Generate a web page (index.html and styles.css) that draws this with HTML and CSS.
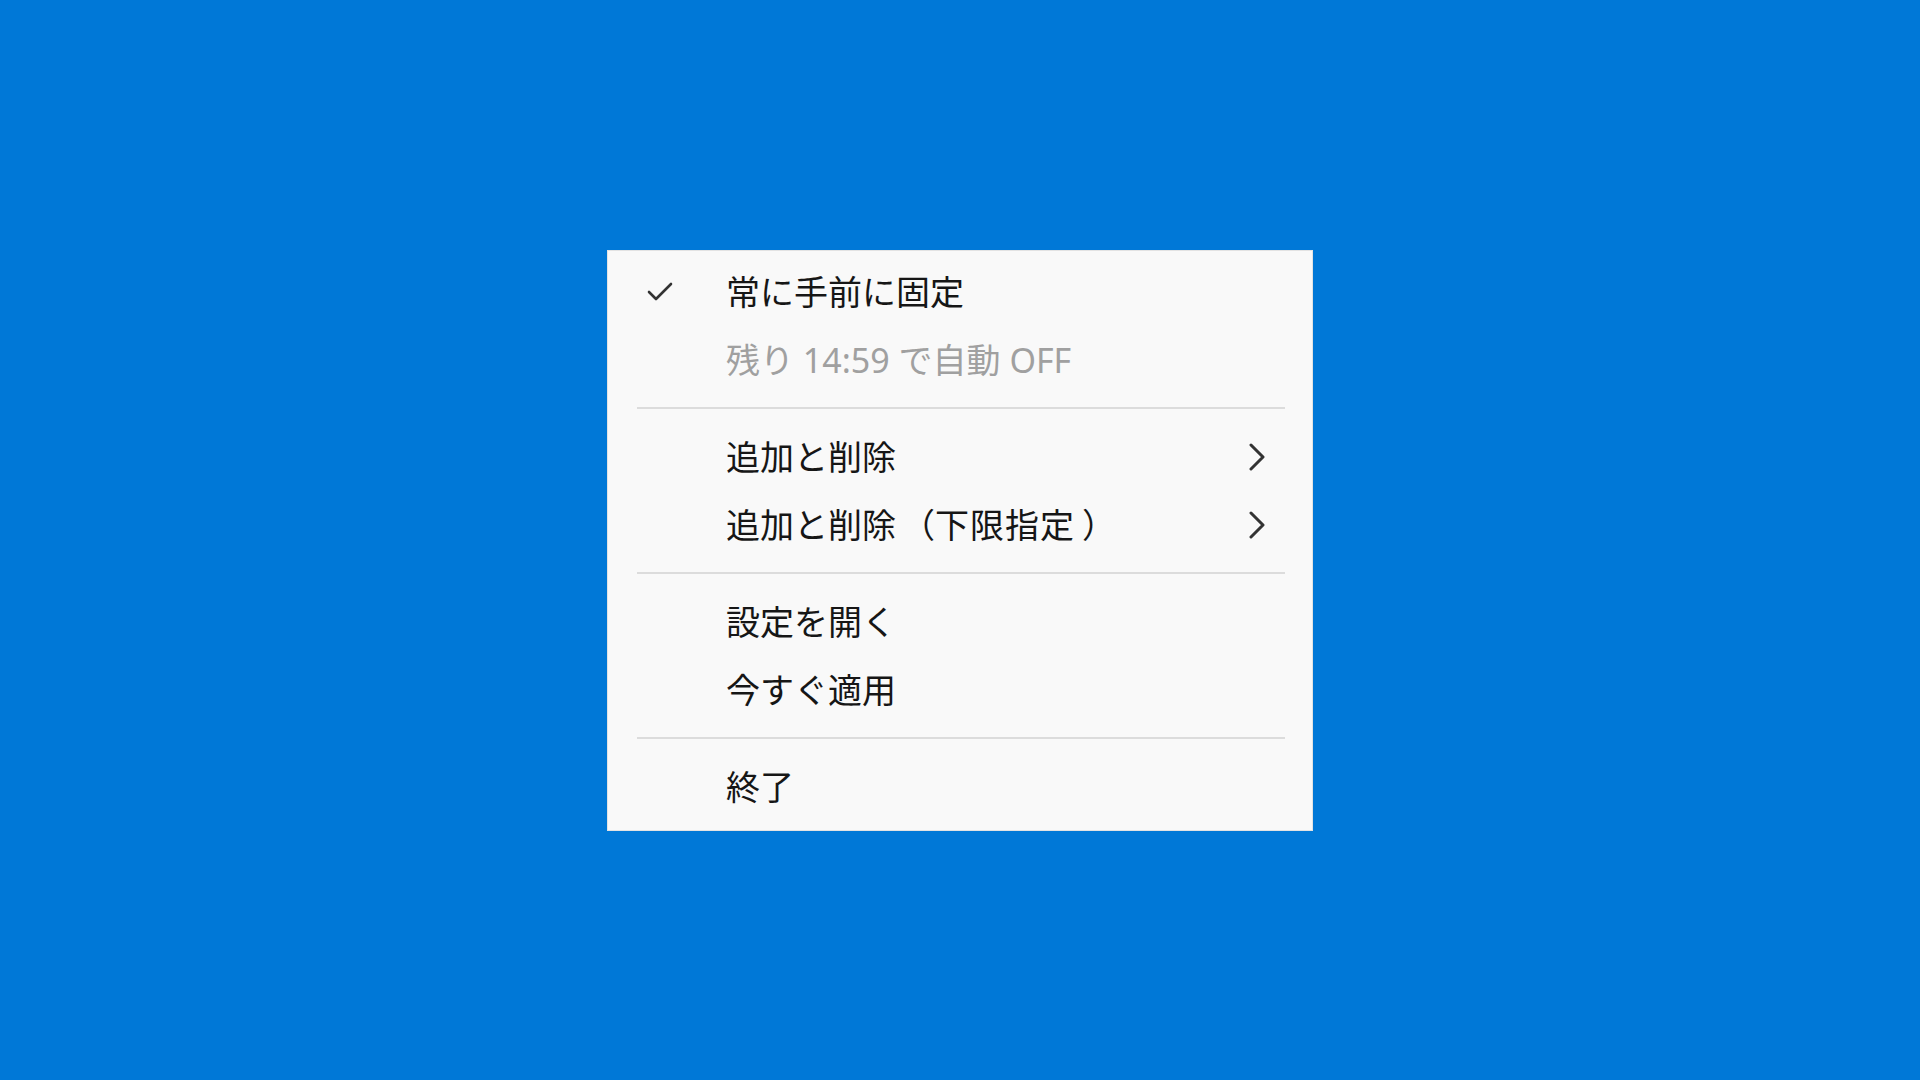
FILE: index.html
```html
<!DOCTYPE html>
<html lang="ja">
<head>
<meta charset="utf-8">
<title>Menu</title>
<link rel="stylesheet" href="styles.css">
</head>
<body>
<div class="menu">
  <div class="item">
    <span class="icon">
      <svg width="26" height="22" viewBox="0 0 26 22"><path d="M2 11 L9 18 L24 3" fill="none" stroke="#333" stroke-width="2.6" stroke-linecap="round" stroke-linejoin="round"/></svg>
    </span>
    <span class="label">常に手前に固定</span>
  </div>
  <div class="item disabled">
    <span class="icon"></span>
    <span class="label">残り 14:59 で自動 OFF</span>
  </div>
  <div class="sep"></div>
  <div class="item">
    <span class="icon"></span>
    <span class="label">追加と削除</span>
    <span class="chev"><svg width="20" height="28" viewBox="0 0 20 28"><path d="M4 2 L16 14 L4 26" fill="none" stroke="#333" stroke-width="3" stroke-linecap="round" stroke-linejoin="round"/></svg></span>
  </div>
  <div class="item">
    <span class="icon"></span>
    <span class="label">追加と削除<span class="po">（</span><span class="tight">下限指定</span><span class="pc">）</span></span>
    <span class="chev"><svg width="20" height="28" viewBox="0 0 20 28"><path d="M4 2 L16 14 L4 26" fill="none" stroke="#333" stroke-width="3" stroke-linecap="round" stroke-linejoin="round"/></svg></span>
  </div>
  <div class="sep"></div>
  <div class="item">
    <span class="icon"></span>
    <span class="label">設定を開く</span>
  </div>
  <div class="item">
    <span class="icon"></span>
    <span class="label">今すぐ適用</span>
  </div>
  <div class="sep"></div>
  <div class="item">
    <span class="icon"></span>
    <span class="label">終了</span>
  </div>
</div>
</body>
</html>
```
FILE: styles.css
```css
html, body {
  margin: 0;
  padding: 0;
}
body {
  width: 1920px;
  height: 1080px;
  background: #0078d7;
  display: flex;
  align-items: center;
  justify-content: center;
  font-family: "Noto Sans", "Noto Sans CJK JP", sans-serif;
}
.menu {
  width: 706px;
  box-sizing: border-box;
  background: #f9f9f9;
  border: 1px solid #e3e3e3;
  padding: 7px 0 9px;
  display: flex;
  flex-direction: column;
}
.item {
  height: 68px;
  display: flex;
  align-items: center;
  color: #161616;
  font-size: 34px;
}
.item.disabled {
  color: #a0a0a0;
}
.icon {
  width: 118px;
  flex: none;
  display: flex;
  justify-content: flex-start;
  padding-left: 39px;
  box-sizing: border-box;
}
.icon svg {
  display: block;
}
.label {
  flex: 1;
  line-height: 1;
  white-space: nowrap;
  text-spacing-trim: space-all;
  font-kerning: none;
}
.tight {
  letter-spacing: 1px;
}
.po, .pc {
  display: inline-block;
}
.po {
  width: 1.15em;
  text-align: right;
}
.pc {
  width: 1em;
  padding-left: 0.2em;
  text-align: left;
}
.chev {
  flex: none;
  width: 20px;
  margin-right: 45px;
  display: flex;
}
.chev svg {
  display: block;
}
.sep {
  height: 2px;
  background: #dcdcdc;
  margin: 13px 27px 14px 29px;
}
```
